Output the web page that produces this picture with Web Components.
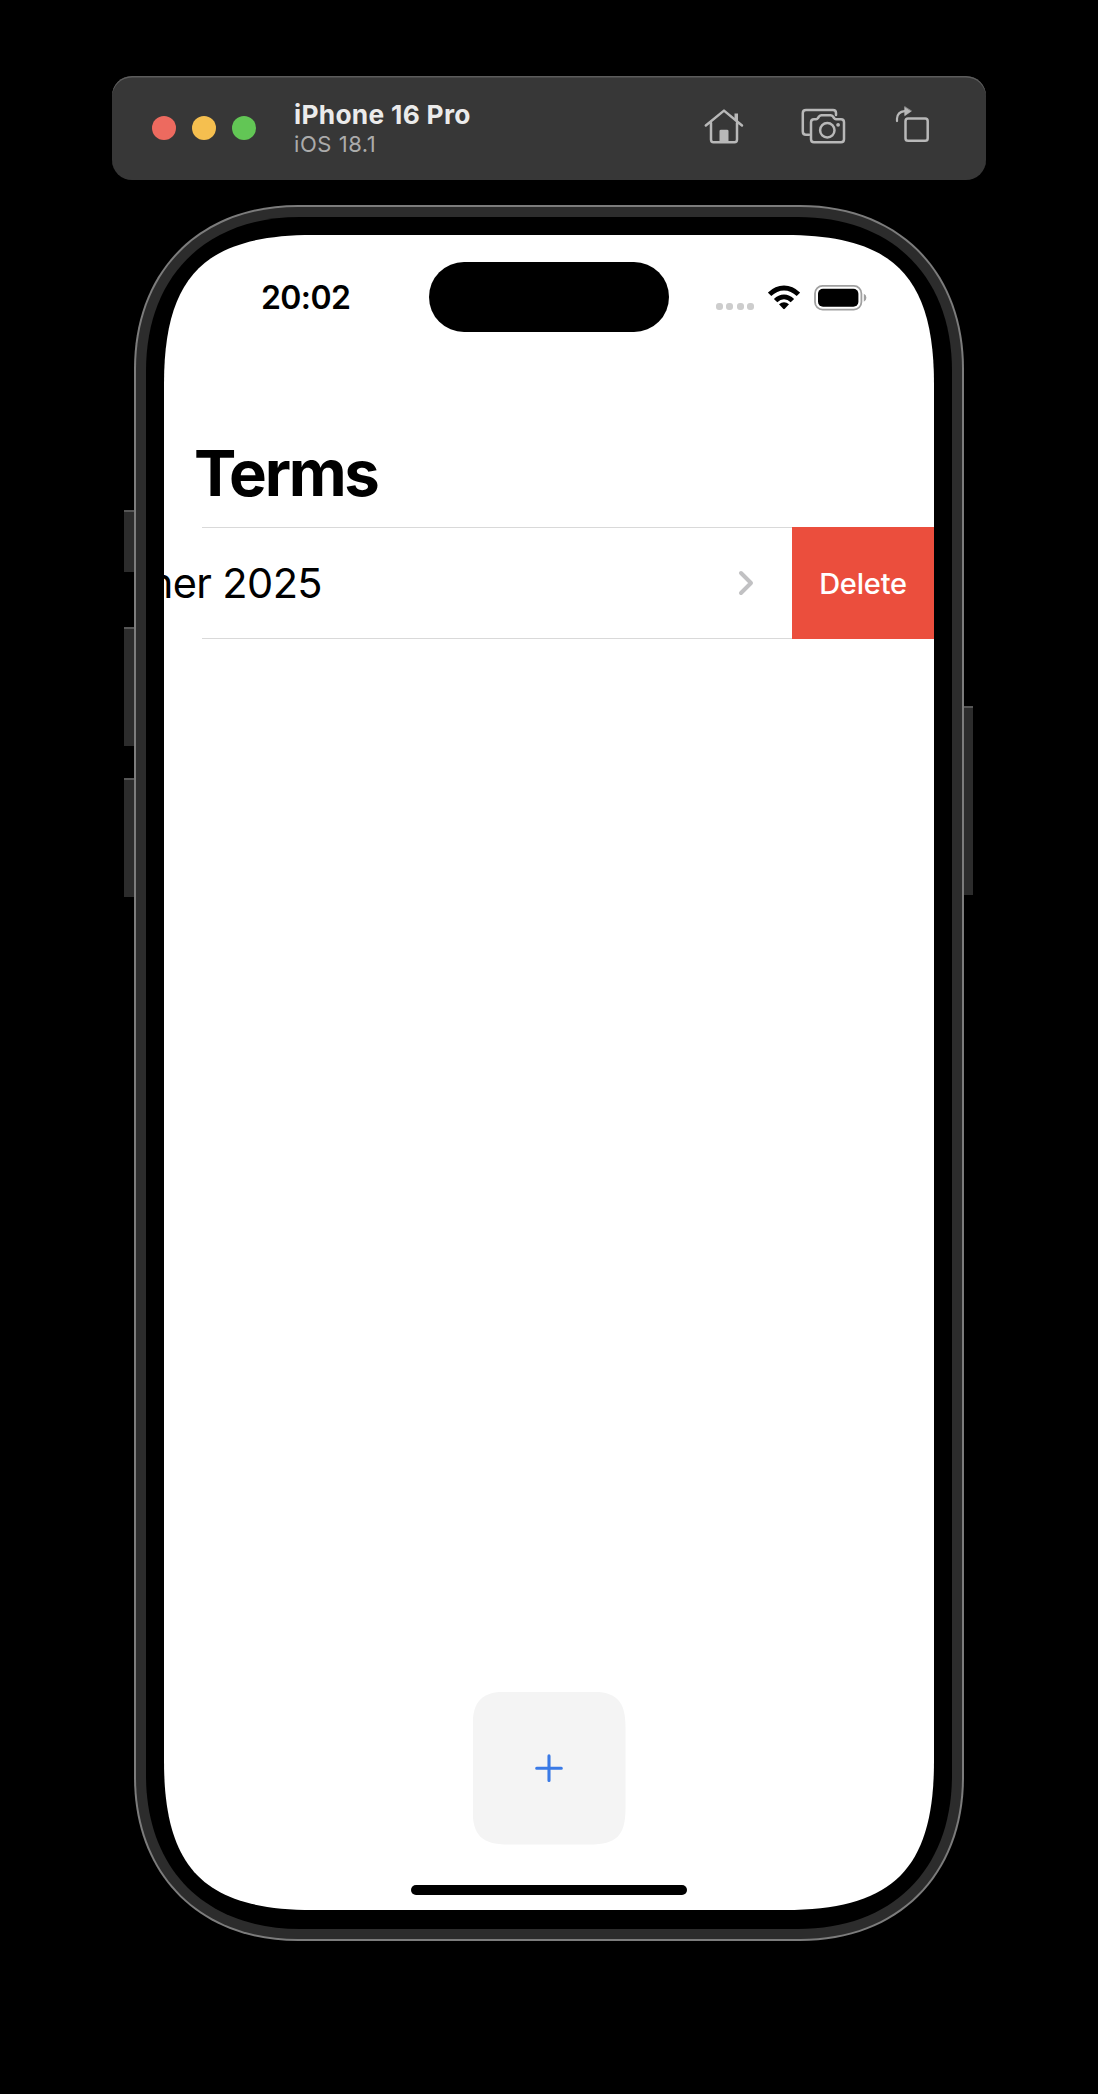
<!DOCTYPE html>
<html lang="en">
<head>
<meta charset="utf-8">
<title>iPhone 16 Pro</title>
<style>
html,body{margin:0;background:#000}
body{width:1098px;height:2094px;overflow:hidden;font-family:Inter,"Liberation Sans",sans-serif}
</style>
</head>
<body>
<simulator-app></simulator-app>
<script>
function define(name, html, setup){
  const t=document.createElement('template');
  t.innerHTML=html;
  customElements.define(name,class extends HTMLElement{
    connectedCallback(){
      if(this.shadowRoot)return;
      this.attachShadow({mode:'open'}).append(t.content.cloneNode(true));
      if(setup)setup(this);
    }
  });
}

// Rounded rectangle whose corners run over e pixels of each side, with handles c pixels from the corner
function squircle(w,h,e,c){
  return `M${e} 0L${w-e} 0C${w-c} 0 ${w} ${c} ${w} ${e}L${w} ${h-e}C${w} ${h-c} ${w-c} ${h} ${w-e} ${h}L${e} ${h}C${c} ${h} 0 ${h-c} 0 ${h-e}L0 ${e}C0 ${c} ${c} 0 ${e} 0Z`;
}

define('squircle-box',`<style>:host{display:flex;flex-direction:column;box-sizing:border-box;flex:none}::slotted(*){flex:none}</style><slot></slot>`,el=>{
  const [w,h,e,c]=['w','h','e','c'].map(n=>+el.getAttribute(n));
  el.style.width=w+'px';el.style.height=h+'px';
  el.style.clipPath=`path("${squircle(w,h,e,c)}")`;
});

define('traffic-lights',`<style>:host{display:flex;gap:16px}i{width:24px;height:24px;border-radius:50%}</style>
<i style="background:#ed6a5f"></i><i style="background:#f5bf4f"></i><i style="background:#62c655"></i>`);

define('simulator-toolbar',`<style>
:host{display:flex;align-items:center;box-sizing:border-box;width:874px;height:104px;padding-left:40px;border-radius:20px;background:#373737;box-shadow:inset 0 1.5px 0 #5c5c5c}
.names{display:flex;flex-direction:column;margin-left:38px;width:400px;padding-top:2px;white-space:nowrap}
.t{font-size:26.3px;line-height:30px;font-weight:700;color:#ebebeb;letter-spacing:.3px}
.s{font-size:22px;line-height:28px;color:#ababab;letter-spacing:.55px}
svg{display:block;fill:none;stroke:#b8b8b8;stroke-width:2.5;stroke-linecap:round;stroke-linejoin:round;flex:none}
</style>
<traffic-lights></traffic-lights>
<div class="names"><span class="t">iPhone 16 Pro</span><span class="s">iOS 18.1</span></div>
<svg width="40" height="40" viewBox="0 0 40 40" style="margin-left:10px"><path d="M1.8 17.5 20 2.6 38 17.5M7 15V31.5Q7 34.3 9.5 34.3H30.5Q33 34.3 33 31.5V15"/><path d="M15.5 34V23Q15.5 21.7 17 21.7H23Q24.5 21.7 24.5 23V34Z" fill="#b8b8b8" stroke="none"/><path d="M30.5 5.5H34V14L30.5 11Z" fill="#b8b8b8" stroke="none"/></svg>
<svg width="46" height="40" viewBox="0 0 46 40" style="margin-left:56px"><path d="M36 7V5Q36 2 33 2H6Q2.8 2 2.8 5V23.5Q2.8 26.8 6 26.8H9"/><path d="M14 11.2H16.2Q17.2 11.2 18 10L19 8.5Q20 7.2 21.5 7.2H30.5Q32 7.2 33 8.5L34 10Q34.8 11.2 36 11.2H41Q44 11.2 44 14.2V31.3Q44 34.3 41 34.3H14Q11 34.3 11 31.3V14.2Q11 11.2 14 11.2Z"/><circle cx="27.3" cy="22.3" r="7.2"/><circle cx="38.1" cy="16.8" r="1.9" fill="#b8b8b8" stroke="none"/></svg>
<svg width="36" height="40" viewBox="0 0 36 40" style="margin-left:49px;overflow:visible"><rect x="10.5" y="10.6" width="22.2" height="22.2" rx="2.6"/><path d="M2 13.1V10.5Q2.5 3.9 9.5 3.1H11" stroke-width="2.2"/><path d="M9.7-1V7.7L16.2 3.2Z" fill="#b8b8b8" stroke="#b8b8b8" stroke-width=".6"/></svg>`);

define('side-key',`<style>:host{display:block;box-sizing:border-box;background:#2c2c2c;border-top:2px solid #565656}</style>`);

define('status-bar',`<style>
:host{display:flex;align-items:flex-start;height:97px;padding-top:27px;box-sizing:border-box;width:770px}
.time{width:168px;padding-left:97px;font-size:32px;line-height:40px;font-weight:600;margin-top:16px;letter-spacing:-.6px}
.island{width:240px;height:70px;border-radius:35px;background:#000}
.dots{display:flex;gap:3.3px;margin:41px 0 0 47px}.dots i{width:7px;height:7px;border-radius:3px;background:#cdcdcd}
svg{display:block;flex:none}
</style>
<div class="time">20:02</div><div class="island"></div>
<div class="dots"><i></i><i></i><i></i><i></i></div>
<svg width="32" height="25" viewBox="0 0 32 25" style="margin:23px 0 0 14px"><g fill="none" stroke="#000" stroke-width="4.8"><path d="M1.6 9.4Q8 3 16 3T30.4 9.4"/><path d="M7.6 15.6Q11.3 11.8 16 11.8T24.4 15.6"/></g><path d="M11 19.3Q16 15.2 21 19.3L16.8 23.8Q16 24.6 15.2 23.8Z"/></svg>
<svg width="54" height="26" viewBox="0 0 54 26" style="margin:23px 0 0 14.5px"><rect x="1" y=".9" width="46.4" height="23.8" rx="7.6" fill="none" stroke="#a0a0a0" stroke-width="1.8"/><rect x="4" y="3.8" width="40.4" height="18" rx="5"/><path d="M49.8 8.8Q52.4 9.8 52.4 12.8T49.8 16.8Z" fill="#a0a0a0"/></svg>`);

define('term-row',`<style>
:host{display:flex;width:770px;height:112px;position:relative}
.content{display:flex;width:628px;align-items:center;box-sizing:border-box;overflow:hidden}
.label{width:158px;flex:none;display:flex;justify-content:flex-end;white-space:nowrap;font-size:41.5px;line-height:56px;letter-spacing:-.6px}
svg{display:block;margin-left:416px}
.del{display:flex;align-items:center;justify-content:center;width:142px;background:#eb4e3d;color:#fff;font-size:29px;font-weight:500;letter-spacing:-.2px}
.line{position:absolute;left:38px;width:590px;height:1px;background:#d9d9d9}
</style>
<div class="content"><span class="label"><slot></slot></span>
<svg width="16" height="26" viewBox="0 0 16 26"><path d="M3 3 13 13 3 23" fill="none" stroke="#c1c1c3" stroke-width="4" stroke-linecap="round" stroke-linejoin="round"/></svg></div>
<div class="del">Delete</div><div class="line" style="top:0"></div><div class="line" style="bottom:0"></div>`);

define('add-button',`<style>:host{display:block}squircle-box{background:#f4f4f4;align-items:center;justify-content:center}</style>
<squircle-box w="153" h="153" e="36" c="9"><svg width="28" height="28" viewBox="0 0 28 28"><path d="M14 1.9V26.5M1.7 14.2H26.3" stroke="#3a7ae6" stroke-width="3.1" stroke-linecap="round"/></svg></squircle-box>`);

define('terms-screen',`<style>
:host{display:flex;flex-direction:column;width:770px;height:1675px;background:#fff;color:#000}
h1{margin:105px 0 0 30px;font-size:63.5px;line-height:72px;font-weight:700;height:90px;letter-spacing:-2.3px}
.foot{display:flex;flex-direction:column;align-items:center;margin-top:auto;padding-bottom:15px}
.home{width:276px;height:10px;border-radius:5px;background:#000;margin-top:40.5px}
</style>
<status-bar></status-bar><h1>Terms</h1><term-row>mer 2025</term-row>
<div class="foot"><add-button></add-button><div class="home"></div></div>`);

define('phone-device',`<style>
:host{display:flex;align-items:flex-start}
.keys{display:flex;flex-direction:column;width:10px}
.right side-key{margin-right:1px}
.edge{background:#7c7c7c;padding:2px}
.ring{background:#2c2c2c;padding:10px}
.bezel{background:#000;padding:18px}
</style>
<div class="keys"><side-key style="margin-top:305px;height:62px"></side-key><side-key style="margin-top:55px;height:119px"></side-key><side-key style="margin-top:32px;height:119px"></side-key></div>
<squircle-box class="edge" w="830" h="1736" e="164" c="65.5"><squircle-box class="ring" w="826" h="1732" e="162" c="64.5"><squircle-box class="bezel" w="806" h="1712" e="154" c="59.5"><squircle-box w="770" h="1675" e="149" c="41"><terms-screen></terms-screen></squircle-box></squircle-box></squircle-box></squircle-box>
<div class="keys right"><side-key style="margin-top:501px;height:189px"></side-key></div>`);

define('simulator-app',`<style>:host{display:flex;flex-direction:column;align-items:center;padding-top:76px;gap:25px}</style>
<simulator-toolbar></simulator-toolbar><phone-device></phone-device>`);
</script>
</body>
</html>
